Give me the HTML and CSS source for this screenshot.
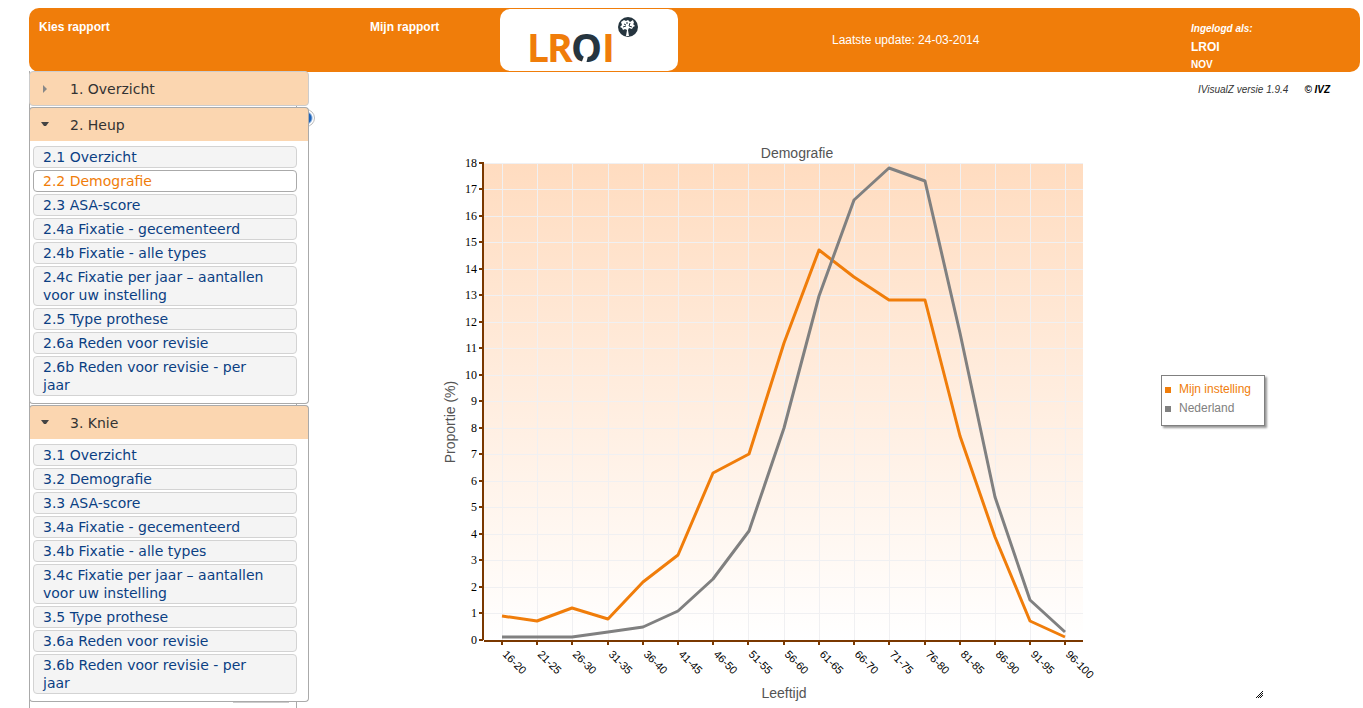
FILE: index.html
```html
<!DOCTYPE html>
<html lang="nl">
<head>
<meta charset="utf-8">
<title>LROI - Demografie</title>
<link rel="stylesheet" href="styles.css">
</head>
<body>
<header class="topbar">
  <strong class="topbar-item">Kies rapport</strong>
  <strong class="topbar-item">Mijn rapport</strong>
  <div class="logo">
    <svg width="178" height="62" viewBox="500 9 178 62" role="img" aria-label="LROI">
      <g class="logo-text">
        <text x="527" y="62">L</text>
        <text x="547" y="62">R</text>
        <text x="571" y="62" class="logo-dark">O</text>
        <text x="602" y="62">I</text>
      </g>
      <path d="M581 64 L584 56 L588 56 L586 64Z" fill="#fff"/>
      <circle cx="628" cy="27" r="10" fill="#26353f"/>
      <path d="M621 22l3-2 2 1 2-1 2 2 3-2 1 3-1 1 2 2-2 1-1 2-3-1-1 2 1 6h-3l1-6-2-1-2 1-1-2-2-1 2-2z" fill="#fff"/>
      <path d="M624 24l2 1M630 23l-1 3M623 27l3-1M632 27l-3-1M627 22v2" stroke="#26353f" fill="none"/>
    </svg>
  </div>
  <div class="update">Laatste update: 24-03-2014</div>
  <div class="user"><em>Ingelogd als:</em><strong>LROI</strong><small>NOV</small></div>
</header>
<main class="main">
  <nav class="sidebar" aria-label="Rapporten">
    <section class="group closed">
      <h3><button type="button" class="group-head"><svg width="10" height="10" viewBox="0 0 10 10"><path d="M2 1v8l4-4z" fill="#888"/></svg>1. Overzicht</button></h3>
    </section>
    <section class="group">
      <h3><button type="button" class="group-head"><svg width="10" height="10" viewBox="0 0 10 10"><path d="M0 2h8L5 6H3z" fill="#444"/></svg>2. Heup</button></h3>
      <ul class="reports">
        <li><a href="#r21">2.1 Overzicht</a></li>
        <li><a href="#r22" class="active">2.2 Demografie</a></li>
        <li><a href="#r23">2.3 ASA-score</a></li>
        <li><a href="#r24a">2.4a Fixatie - gecementeerd</a></li>
        <li><a href="#r24b">2.4b Fixatie - alle types</a></li>
        <li><a href="#r24c">2.4c Fixatie per jaar – aantallen voor uw instelling</a></li>
        <li><a href="#r25">2.5 Type prothese</a></li>
        <li><a href="#r26a">2.6a Reden voor revisie</a></li>
        <li><a href="#r26b">2.6b Reden voor revisie - per jaar</a></li>
      </ul>
    </section>
    <section class="group">
      <h3><button type="button" class="group-head"><svg width="10" height="10" viewBox="0 0 10 10"><path d="M0 2h8L5 6H3z" fill="#444"/></svg>3. Knie</button></h3>
      <ul class="reports">
        <li><a href="#r31">3.1 Overzicht</a></li>
        <li><a href="#r32">3.2 Demografie</a></li>
        <li><a href="#r33">3.3 ASA-score</a></li>
        <li><a href="#r34a">3.4a Fixatie - gecementeerd</a></li>
        <li><a href="#r34b">3.4b Fixatie - alle types</a></li>
        <li><a href="#r34c">3.4c Fixatie per jaar – aantallen voor uw instelling</a></li>
        <li><a href="#r35">3.5 Type prothese</a></li>
        <li><a href="#r36a">3.6a Reden voor revisie</a></li>
        <li><a href="#r36b">3.6b Reden voor revisie - per jaar</a></li>
      </ul>
    </section>
    <div class="edge"></div>
  </nav>
  <button type="button" class="info" aria-label="Informatie"></button>
  <figure class="chart">
    <svg width="680" height="566" viewBox="430 140 680 566" role="img" aria-label="Demografie">
      <defs><linearGradient id="bg" x1="0" y1="0" x2="0" y2="1"><stop offset="0" stop-color="#ffdcc0"/><stop offset="1" stop-color="#fff"/></linearGradient></defs>
      <rect x="484" y="163" width="599" height="477" fill="url(#bg)"/>
      <path class="grid" d="M484 163H1083M484 189H1083M484 216H1083M484 242H1083M484 269H1083M484 295H1083M484 322H1083M484 348H1083M484 375H1083M484 401H1083M484 428H1083M484 454H1083M484 481H1083M484 507H1083M484 534H1083M484 560H1083M484 587H1083M484 613H1083"/>
      <path class="grid" d="M502 163V640M537 163V640M572 163V640M608 163V640M643 163V640M678 163V640M713 163V640M748 163V640M784 163V640M819 163V640M854 163V640M889 163V640M925 163V640M960 163V640M995 163V640M1030 163V640M1065 163V640"/>
      <path class="axis" d="M483 162V640M484 641H1083"/>
      <path class="axis" d="M479 163h4M479 189h4M479 216h4M479 242h4M479 269h4M479 295h4M479 322h4M479 348h4M479 375h4M479 401h4M479 428h4M479 454h4M479 481h4M479 507h4M479 534h4M479 560h4M479 587h4M479 613h4M479 640h4"/>
      <path class="axis" d="M502 641v4M537 641v4M572 641v4M608 641v4M643 641v4M678 641v4M713 641v4M748 641v4M784 641v4M819 641v4M854 641v4M889 641v4M925 641v4M960 641v4M995 641v4M1030 641v4M1065 641v4"/>
      <polyline class="line own" points="502,616 537,621 572,608 608,619 643,582 678,555 713,473 749,454 784,343 819,250 854,277 889,300 925,300 960,436 995,537 1030,621 1065,637"/>
      <polyline class="line all" points="502,637 537,637 572,637 608,632 643,627 678,611 713,579 749,531 784,428 819,296 854,200 889,168 925,181 960,333 995,497 1030,600 1065,632"/>
      <g class="ylabels">
        <text x="477" y="167">18</text><text x="477" y="193">17</text><text x="477" y="220">16</text><text x="477" y="246">15</text><text x="477" y="273">14</text><text x="477" y="299">13</text><text x="477" y="326">12</text><text x="477" y="352">11</text><text x="477" y="379">10</text><text x="477" y="405">9</text><text x="477" y="432">8</text><text x="477" y="458">7</text><text x="477" y="485">6</text><text x="477" y="511">5</text><text x="477" y="538">4</text><text x="477" y="564">3</text><text x="477" y="591">2</text><text x="477" y="617">1</text><text x="477" y="644">0</text>
      </g>
      <g class="xlabels">
        <text transform="translate(502 655) rotate(45)">16-20</text>
        <text transform="translate(537 655) rotate(45)">21-25</text>
        <text transform="translate(572 655) rotate(45)">26-30</text>
        <text transform="translate(608 655) rotate(45)">31-35</text>
        <text transform="translate(643 655) rotate(45)">36-40</text>
        <text transform="translate(678 655) rotate(45)">41-45</text>
        <text transform="translate(713 655) rotate(45)">46-50</text>
        <text transform="translate(748 655) rotate(45)">51-55</text>
        <text transform="translate(784 655) rotate(45)">56-60</text>
        <text transform="translate(819 655) rotate(45)">61-65</text>
        <text transform="translate(854 655) rotate(45)">66-70</text>
        <text transform="translate(889 655) rotate(45)">71-75</text>
        <text transform="translate(925 655) rotate(45)">76-80</text>
        <text transform="translate(960 655) rotate(45)">81-85</text>
        <text transform="translate(995 655) rotate(45)">86-90</text>
        <text transform="translate(1030 655) rotate(45)">91-95</text>
        <text transform="translate(1065 655) rotate(45)">96-100</text>
      </g>
      <g class="titles">
        <text x="797" y="158">Demografie</text>
        <text x="784" y="698">Leeftijd</text>
        <text transform="translate(455 422) rotate(-90)">Proportie (%)</text>
      </g>
    </svg>
  </figure>
  <aside class="side">
    <p class="version">IVisualZ versie 1.9.4<a href="#ivz">© IVZ</a></p>
    <ul class="legend">
      <li class="legend-own">Mijn instelling</li>
      <li class="legend-all">Nederland</li>
    </ul>
    <svg class="grip" width="8" height="8" viewBox="0 0 8 8" shape-rendering="crispEdges"><path d="M6 0h1v1h-1zM5 1h1v1h-1zM4 2h1v1h-1zM6 2h1v1h-1zM3 3h1v1h-1zM5 3h1v1h-1zM2 4h1v1h-1zM4 4h1v1h-1zM6 4h1v1h-1zM1 5h1v1h-1zM3 5h1v1h-1zM5 5h1v1h-1zM0 6h1v1h-1zM2 6h1v1h-1zM4 6h1v1h-1z" fill="#111"/></svg>
  </aside>
</main>
</body>
</html>
```
FILE: styles.css
```css
* { box-sizing: border-box; }
body {
  display: flex;
  flex-direction: column;
  min-height: 100vh;
  margin: 0;
  padding: 8px 3px 0 29px;
  background: #fff;
  font-family: "Liberation Sans", Arial, sans-serif;
  font-size: 12px;
}
h3, ul, p, figure { margin: 0; padding: 0; }
h3 { font-size: 14px; font-weight: normal; }
ul { list-style: none; }
svg { display: block; overflow: visible; }

.topbar {
  display: grid;
  grid-template-columns: 331px 130px 178px 1fr 170px;
  grid-template-rows: 64px;
  padding-left: 10px;
  border-radius: 10px;
  background: #f07d0a;
  color: #fff;
}
.topbar-item { padding-top: 12px; line-height: 14px; }
.logo { margin: 1px 0; border-radius: 10px; background: #fff; }
.logo-text { font: bold 39px "Open Sans", "Noto Sans", sans-serif; fill: #f07d0a; }
.logo-dark { fill: #26353f; }
.update { padding: 25px 0 0 154px; line-height: 14px; }
.user { display: flex; flex-direction: column; padding: 12px 0 0 1px; line-height: 18px; }
.user em { font-size: 10px; font-weight: bold; }
.user small { font-size: 10px; font-weight: bold; }

.main { position: relative; display: flex; flex: 1; margin-top: -1px; }
.sidebar {
  position: relative;
  z-index: 1;
  flex: none;
  width: 268px;
  border: solid #aaa;
  border-width: 0 1px;
  font-family: "DejaVu Sans", Verdana, sans-serif;
  font-size: 14px;
}
.group { margin: 0 -13px 1px -1px; }
.group-head {
  display: flex;
  align-items: center;
  gap: 19px;
  width: 100%;
  height: 34px;
  padding: 0 11px;
  border: 1px solid #aaa;
  border-bottom: 0;
  border-radius: 4px 4px 0 0;
  background: #fbd6b0;
  color: #333;
  font: inherit;
  text-align: left;
}
.closed .group-head { height: 35px; border: 1px solid #ccc; border-radius: 4px; }
.reports {
  display: flex;
  flex-direction: column;
  gap: 2px;
  padding: 5px 11px 7px 3px;
  border: 1px solid #aaa;
  border-top: 0;
  border-radius: 0 0 4px 4px;
  background: #fff;
}
.reports a {
  display: block;
  padding: 1px 24px 1px 9px;
  border: 1px solid #d3d3d3;
  border-radius: 4px;
  background: #f4f4f4;
  color: #0b3f83;
  line-height: 18px;
  text-decoration: none;
}
.reports .active { border-color: #aaa; background: #fff; color: #f07d0a; }
.edge { width: 56px; height: 1px; margin: -1px 7px 0 auto; background: #ccc; }
.info {
  position: absolute;
  top: 38px;
  left: 268px;
  width: 18px;
  height: 18px;
  padding: 0;
  border: 1px solid #bbb;
  border-radius: 50%;
  background: radial-gradient(circle, #1c62b8 0 5px, #fff 7px);
}

.chart { margin: 69px 0 0 133px; }
.line { fill: none; stroke-width: 3; stroke-linejoin: round; }
.own { stroke: #f07d0a; }
.all { stroke: #808080; }
.grid { stroke: #f0f0f2; shape-rendering: crispEdges; }
.axis { stroke: #7a3800; stroke-width: 2; shape-rendering: crispEdges; }
.ylabels { font: 12px "Liberation Serif", serif; text-anchor: end; }
.xlabels { font-size: 11px; }
.titles { font-size: 14px; fill: #545454; text-anchor: middle; }

.side { display: flex; flex: 1; flex-direction: column; align-items: flex-start; padding-left: 51px; }
.version { padding: 12px 0 0 37px; color: #333; font-size: 10px; font-style: italic; line-height: 14px; white-space: nowrap; }
.version a { margin-left: 16px; color: #000; font-weight: bold; text-decoration: none; }
.legend {
  margin-top: 278px;
  padding: 4px 13px 7px 3px;
  border: 1px solid #808080;
  background: #fff;
  box-shadow: 2px 2px 2px #999;
  line-height: 19px;
}
.legend li { display: flex; align-items: center; gap: 8px; }
.legend li::before { width: 6px; height: 6px; background: currentColor; content: ""; }
.legend-own { color: #f07d0a; }
.legend-all { color: #808080; }
.grip { margin: auto 0 9px 95px; }
```
